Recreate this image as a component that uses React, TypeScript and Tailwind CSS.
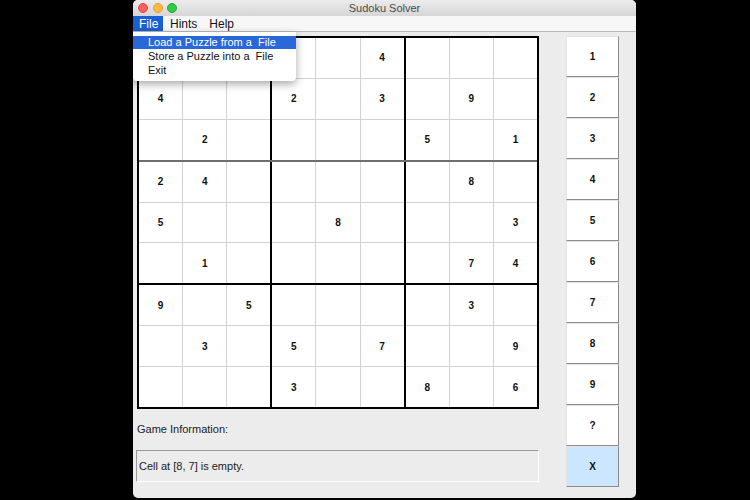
import React from "react";

const board: string[][] = [
  ["", "", "", "", "", "4", "", "", ""],
  ["4", "", "", "2", "", "3", "", "9", ""],
  ["", "2", "", "", "", "", "5", "", "1"],
  ["2", "4", "", "", "", "", "", "8", ""],
  ["5", "", "", "", "8", "", "", "", "3"],
  ["", "1", "", "", "", "", "", "7", "4"],
  ["9", "", "5", "", "", "", "", "3", ""],
  ["", "3", "", "5", "", "7", "", "", "9"],
  ["", "", "", "3", "", "", "8", "", "6"],
];

const keys = ["1", "2", "3", "4", "5", "6", "7", "8", "9", "?", "X"];

function Block({ br, bc }: { br: number; bc: number }) {
  const cells = [];
  for (let r = 0; r < 3; r++) {
    for (let c = 0; c < 3; c++) {
      const v = board[br * 3 + r][bc * 3 + c];
      cells.push(
        <div key={`${r}-${c}`} className="bg-white flex items-center justify-center text-[10px] font-bold text-[#111]">
          {v}
        </div>
      );
    }
  }
  return <div className="flex-1 grid grid-cols-3 grid-rows-3 gap-px bg-[#d2d2d2]">{cells}</div>;
}

function BlockRow({ br }: { br: number }) {
  return (
    <div className="flex flex-1">
      <Block br={br} bc={0} />
      <div className="w-[2px] bg-black" />
      <Block br={br} bc={1} />
      <div className="w-[2px] bg-black" />
      <Block br={br} bc={2} />
    </div>
  );
}

export default function App() {
  return (
    <div
      className="w-[750px] h-[500px] bg-black pl-[133px] overflow-hidden"
      style={{ fontFamily: '"Liberation Sans", Arial, sans-serif' }}>
      <div className="relative w-[503px] h-[498px] bg-[#ececec] rounded-[5px] overflow-hidden flex flex-col">
        {/* title bar */}
        <div className="relative h-[16px] bg-gradient-to-b from-[#ececec] to-[#d6d6d6] flex items-center justify-center">
          <div className="absolute left-[5px] top-[3px] flex gap-[4.5px]">
            <span className="w-[10px] h-[10px] rounded-full bg-[#fc605c] border border-[#de4a44]" />
            <span className="w-[10px] h-[10px] rounded-full bg-[#fdbc40] border border-[#dea032]" />
            <span className="w-[10px] h-[10px] rounded-full bg-[#34c84a] border border-[#27aa35]" />
          </div>
          <span className="text-[11px] text-[#4a4a4a]">Sudoku Solver</span>
        </div>
        {/* menu bar */}
        <div className="h-[16px] bg-[#f7f7f7] border-b border-[#b8b8b8] flex items-stretch text-[12px] text-[#111]">
          <div className="bg-[#1b5fd4] text-white px-[6px] flex items-center w-[30px]">File</div>
          <div className="px-[6px] ml-[1px] flex items-center">Hints</div>
          <div className="px-[6px] flex items-center">Help</div>
        </div>

        <div className="flex pt-[4px] pl-[4px]">
          <div className="flex flex-col w-[402px]">
            <div className="h-[373px] border-2 border-black flex flex-col bg-black">
              <BlockRow br={0} />
              <div className="h-[2px] bg-[#6e6e6e]" />
              <BlockRow br={1} />
              <div className="h-[2px] bg-black" />
              <BlockRow br={2} />
            </div>
            <div className="h-[41px] flex items-center text-[11px] text-[#222]">Game Information:</div>
            <div className="h-[32px] -ml-[1px] w-[403px] border border-t-[#9a9a9a] border-l-[#9a9a9a] border-b-white border-r-white flex items-center pl-[2px] text-[11px] text-[#222]">
              Cell at [8, 7] is empty.
            </div>
          </div>
          <div className="ml-[27px] flex flex-col w-[53px]">
            {keys.map(k => (
              <div
                key={k}
                className={`h-[41px] flex items-center justify-center text-[10px] font-bold text-[#111] border border-t-[#e4e4e4] border-l-[#e4e4e4] border-r-[#8a8a8a] border-b-[#8a8a8a] ${
                  k === "X" ? "bg-[#cce6ff]" : "bg-white"
                }`}>
                {k}
              </div>
            ))}
          </div>
        </div>

        {/* open File menu */}
        <div className="absolute left-0 top-[32px] w-[163px] bg-white shadow-[0_3px_8px_rgba(0,0,0,0.35)] rounded-b-[4px] pt-[4px] pb-[4px] text-[11px] text-[#111]">
          <div className="h-[13px] bg-[#2a67d8] text-white pl-[15px] flex items-center whitespace-pre">Load a Puzzle from a  File</div>
          <div className="h-[14px] pl-[15px] flex items-center whitespace-pre">Store a Puzzle into a  File</div>
          <div className="h-[14px] pl-[15px] flex items-center">Exit</div>
        </div>
      </div>
    </div>
  );
}
